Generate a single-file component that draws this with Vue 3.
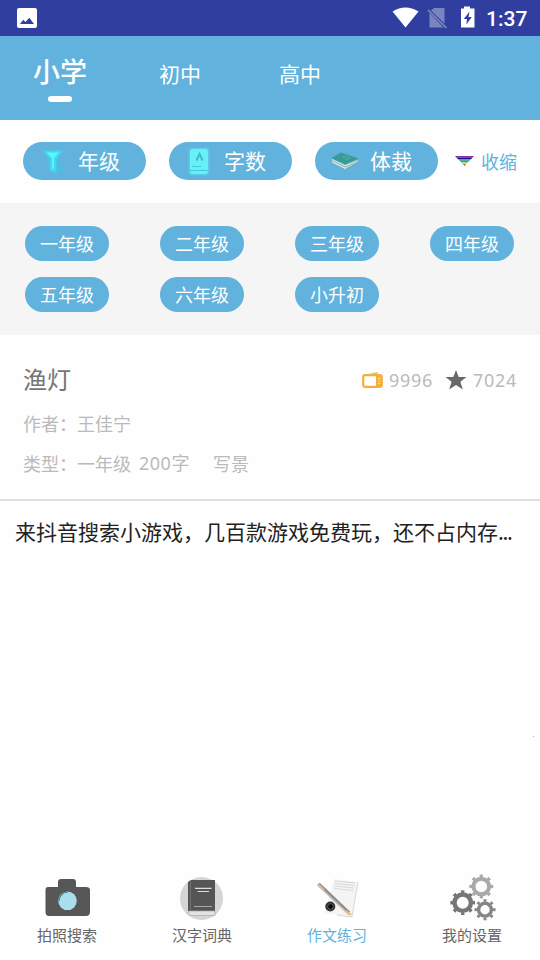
<script setup>
const tabs = ['小学', '初中', '高中']
const grades = ['一年级', '二年级', '三年级', '四年级', '五年级', '六年级', '小升初']
const gears = [
  { x: 32.7, y: 32.7, r: 8.2, w: 4.4, color: '#777777' },
  { x: 51.3, y: 16.5, r: 7.8, w: 4, color: '#a9a9a9' },
  { x: 55, y: 39.7, r: 6.4, w: 3.4, color: '#858585' },
]
</script>

<template>
  <div class="screen">
    <div class="status">
      <svg class="pic" width="20" height="20" viewBox="0 0 20 20">
        <rect width="20" height="20" rx="2" fill="#fff" />
        <path d="M3 16 L6.2 11.8 L8.5 14 L12.3 9.7 L17 16Z" fill="#303f9f" />
      </svg>
      <svg class="sys" width="86" height="24" viewBox="0 0 86 24">
        <path d="M.5 5.5 Q13.500 -2.500 26.500 5.500 L13.500 21.500Z" fill="#fff" />
        <path d="M39 4.500 L42 2 H52.500 V17.500Z M37.500 7 V21.500 H51.500Z" fill="#fff" fill-opacity=".36" />
        <path d="M36 4 L54.500 22" stroke="#7f89c4" stroke-width="1.700" />
        <path d="M69 2.500 H72 V.5 H78 V2.500 H82.500 V21.500 H69Z" fill="#fff" />
        <path d="M77.500 5.500 L71.800 13 H75 L74.300 18.500 L79.800 11 H76.500Z" fill="#303f9f" />
      </svg>
      <span class="clock">1:37</span>
    </div>

    <nav class="tabs">
      <div v-for="(t, i) in tabs" :key="t" class="tab" :class="{ active: i === 0 }">
        <span>{{ t }}</span>
        <i v-if="i === 0"></i>
      </div>
    </nav>

    <div class="filters">
      <div class="pill">
        <svg width="26" height="30" viewBox="0 0 26 30">
          <path d="M4 5 H22 L16 13 V26 L10 24.500 V13Z" fill="#35dcf4" stroke="#48d3f0" stroke-opacity=".5" stroke-width="2" />
          <path d="M6 6.500 H19 L14 12 V23 H12 V12Z" fill="#5cf6f4" />
          <path d="M18 16 H21 M18 20 H22 M18 24 H23" stroke="#35c9ed" stroke-width="1.500" />
        </svg>
        <span>年级</span>
      </div>
      <div class="pill">
        <svg width="26" height="30" viewBox="0 0 26 30">
          <rect x="2.500" y="1.500" width="21" height="28" rx="4" fill="#52e2f4" fill-opacity=".45" />
          <rect x="4" y="3" width="18" height="25" rx="3" fill="#68f1f4" />
          <path d="M10.500 14.500 L13.500 8 L16.500 14.500" fill="none" stroke="#42b8d4" stroke-width="2" />
          <path d="M6 20.500 H15 M4 24.500 H22" stroke="#46c7de" />
        </svg>
        <span>字数</span>
      </div>
      <div class="pill">
        <svg class="bookicon" width="30" height="20" viewBox="0 0 30 20">
          <path d="M2 8 L15 14 L28 9 V12 L16 18.500 L2 11.500Z" fill="#d0e6dc" />
          <path d="M2 9.500 L15.500 16 L28 10.500" fill="none" stroke="#8fb5a8" />
          <path d="M1.500 7 L11 1.500 L28.500 7.500 L15.500 13.500Z" fill="#399b98" />
          <path d="M13 6.500 L16 5 L20 7 L17 8.500Z" fill="none" stroke="#58aca3" />
          <path d="M16 18 L28.500 11.500" stroke="#5d9c94" />
        </svg>
        <span>体裁</span>
      </div>
      <div class="collapse">
        <svg width="19" height="10" viewBox="0 0 19 10">
          <path d="M0 0H19L17.700 1.400H1.300Z" fill="#8e28ae" />
          <path d="M1.300 1.400H17.700L15.900 3.200H3.100Z" fill="#171389" />
          <path d="M3.100 3.200H15.900L14.200 4.800H4.800Z" fill="#1593dc" />
          <path d="M4.800 4.800H14.200L12.600 6.500H6.400Z" fill="#20bd43" />
          <path d="M6.400 6.500H12.600L11 8.200H8Z" fill="#e4d52c" />
          <path d="M8 8.200H11L9.500 10Z" fill="#e33422" />
        </svg>
        <span>收缩</span>
      </div>
    </div>

    <div class="grades">
      <div v-for="g in grades" :key="g" class="cell"><span class="chip">{{ g }}</span></div>
    </div>

    <article class="essay">
      <div class="head">
        <h2>渔灯</h2>
        <div class="stats">
          <svg width="21" height="16" viewBox="0 0 21 16">
            <rect x="1.200" y="3.200" width="18.600" height="11.600" rx="2" fill="#fff" stroke="#f5ae3b" stroke-width="2.200" />
            <path d="M14 3 H20 V14.500 H14Z" fill="#f5ae3b" />
            <path d="M16 6.500 H18.500 M16 9 H18.500 M16 11.500 H18.500" stroke="#ffe0a6" stroke-width=".8" />
            <path d="M7 2.500 L16 .8" stroke="#f5b955" stroke-width="1.500" />
          </svg>
          <span class="num views">9996</span>
          <svg width="22" height="20" viewBox="0 0 22 20">
            <path d="M11 0 L13.700 7 H21.500 L15.400 11.700 L17.800 19.500 L11 15 L4.200 19.500 L6.600 11.700 L.5 7 H8.300Z" fill="#686868" />
          </svg>
          <span class="num stars">7024</span>
        </div>
      </div>
      <p class="author">作者：王佳宁</p>
      <p class="kind"><span>类型：一年级</span><span class="count">200<b>字</b></span><span>写景</span></p>
    </article>

    <div class="promo">来抖音搜索小游戏，几百款游戏免费玩，还不占内存<span>...</span></div>

    <div class="space"><i></i></div>

    <footer class="bottom">
      <div class="item">
        <svg width="90" height="52" viewBox="0 0 90 52">
          <path d="M18 17 H28 V12 Q28 9 31 9 H43 Q46 9 46 12 V17 H56 Q60 17 60 20 V42 Q60 46 56 46 H19 Q15.500 46 15.500 42 V20 Q15.500 17 18 17Z" fill="#575757" />
          <circle cx="37.500" cy="30.800" r="9.300" fill="#a8deee" />
          <path d="M29 31 A9 9 0 0 1 38 22" fill="none" stroke="#46777e" stroke-width="1.200" />
        </svg>
        <span>拍照搜索</span>
      </div>
      <div class="item">
        <svg width="90" height="52" viewBox="0 0 90 52">
          <circle cx="41.500" cy="28.500" r="21.500" fill="#d5d5d5" />
          <path d="M28 12 L31 10 H55 V41 H28Z" fill="#555" />
          <path d="M29 41 H55 V45.500 H30 Q27 43 29 41Z" fill="#e2e2e2" stroke="#aaa" stroke-width=".7" />
          <path d="M30.500 11 V40.500" stroke="#707070" />
          <path d="M35 18.300 H51.500 M37.500 21.500 H49" stroke="#ddd" stroke-width="1.200" />
          <path d="M34 36.500 H52" stroke="#bbb" stroke-width=".8" />
        </svg>
        <span>汉字词典</span>
      </div>
      <div class="item selected">
        <svg width="90" height="52" viewBox="0 0 90 52">
          <path d="M39 9 L63 12 L57 47 L30 43Z" fill="#f4f4f4" />
          <path d="M63 12 L57 47 L42 45" fill="none" stroke="#d8d8d8" />
          <path d="M40 11 L60 13 M40 13.500 L59.500 15.500 M39 16 L59 18 M39 18.500 L58.500 20.500" stroke="#d0d0d0" stroke-width=".8" />
          <path d="M23.500 14 L54 43" stroke="#8f8b8a" stroke-width="3.500" />
          <path d="M24 16 L54 44.500" stroke="#cfbdb4" stroke-width="1.200" />
          <path d="M23 14 L29 20" stroke="#d9b79f" stroke-width="2" />
          <path d="M51 41 L56 45" stroke="#edbd80" stroke-width="2.200" />
          <circle cx="35.300" cy="36.500" r="5" fill="#333" />
          <circle cx="35.500" cy="36.500" r="2.800" fill="#080808" stroke="#777" stroke-width=".7" />
        </svg>
        <span>作文练习</span>
      </div>
      <div class="item">
        <svg width="90" height="52" viewBox="0 0 90 52">
          <g v-for="g in gears" :key="g.x" fill="none" :stroke="g.color">
            <circle :cx="g.x" :cy="g.y" :r="g.r" :stroke-width="g.w" />
            <circle :cx="g.x" :cy="g.y" :r="g.r + 2.8" stroke-width="2.700" pathLength="16" stroke-dasharray=".8 1.200" stroke-dashoffset=".4" />
          </g>
        </svg>
        <span>我的设置</span>
      </div>
    </footer>
  </div>
</template>

<style>
body { margin: 0; background: #fff; }
</style>

<style scoped>
.screen { width: 540px; height: 960px; display: flex; flex-direction: column; overflow: hidden; background: #fefefe; font-family: "Noto Sans CJK SC", sans-serif; }
svg { display: block; flex: none; }
.status { height: 36px; flex: none; background: #303f9f; display: flex; align-items: center; padding: 0 12px 0 17px; box-sizing: border-box; }
.sys { margin-left: auto; }
.clock { width: 42px; margin-left: 8px; font: 500 21px/36px Roboto, sans-serif; color: #fff; white-space: nowrap; padding-top: 2px; }
.tabs { height: 84px; flex: none; background: #61b3dd; display: flex; color: #fff; }
.tab { width: 120px; display: flex; flex-direction: column; align-items: center; font-size: 21px; line-height: 30px; padding-top: 22px; box-sizing: border-box; }
.tab.active { font-size: 27px; font-weight: 500; padding-top: 20px; }
.tab i { width: 24px; height: 6px; border-radius: 3px; background: #fff; margin-top: 10px; }
.filters { height: 83px; flex: none; padding: 22px 23px 0; box-sizing: border-box; display: flex; gap: 23px; }
.pill { width: 123px; height: 38px; flex: none; border-radius: 19px; background: #61b3dd; color: #fff; display: flex; align-items: center; box-sizing: border-box; padding-left: 17px; gap: 12px; font-size: 21px; line-height: 36px; }
.pill span { height: 38px; }
.bookicon { margin-left: -2px; margin-right: -2px; }
.collapse { height: 38px; margin-left: -6px; display: flex; align-items: center; gap: 7px; font-size: 18px; color: #61b3dd; white-space: nowrap; line-height: 38px; }
.grades { height: 132px; flex: none; background: #f5f5f5; display: grid; grid-template-columns: repeat(4, 135px); grid-auto-rows: 35px; row-gap: 16px; padding-top: 23px; box-sizing: border-box; }
.cell { padding-left: 25px; }
.chip { display: block; width: 84px; height: 35px; line-height: 35px; border-radius: 18px; background: #61b3dd; color: #fff; font-size: 18px; text-align: center; }
.essay { height: 166px; flex: none; box-sizing: border-box; border-bottom: 2px solid #dedede; padding: 27px 22px 0 23px; color: #bababa; font-size: 18px; }
.head { display: flex; justify-content: space-between; height: 36px; align-items: center; }
h2 { margin: 0; font-size: 24px; line-height: 34px; height: 36px; font-weight: 400; color: #757575; }
.stats { display: flex; align-items: center; }
.num { font-family: "Noto Sans", sans-serif; font-size: 18px; line-height: 36px; letter-spacing: .7px; }
.views { width: 44px; margin: 0 12px 0 6px; }
.stars { width: 44px; margin-left: 6px; margin-right: 1px; }
.stats svg:first-child { margin-right: 0; }
p { margin: 0; line-height: 40px; height: 40px; white-space: pre; }
.author { margin-top: 5px; }
.kind { display: flex; }
.kind .count { margin: 0 23px 0 8px; font-family: "Noto Sans", "Noto Sans CJK SC", sans-serif; letter-spacing: .5px; }
.kind b { font-weight: 400; }
.promo { height: 60px; flex: none; padding-left: 15px; font-size: 21px; line-height: 60px; color: #222; white-space: nowrap; }
.promo span { letter-spacing: -1.300px; }
.space { flex: 1; display: flex; justify-content: flex-end; }
.space i { width: 1px; height: 1px; margin: 175px 6px 0 0; background: #c6ac70; }
.bottom { height: 90px; flex: none; display: flex; }
.item { width: 135px; box-sizing: border-box; padding-left: 30px; color: #666; font-size: 15px; line-height: 24px; }
.item span { display: block; width: 74px; text-align: center; margin-top: 1px; }
.item:not(:first-child) { padding-left: 25px; }
.item:not(:first-child) span { width: 84px; }
.item:last-child { padding-left: 25px; }
.selected { color: #61b3dd; }
</style>
